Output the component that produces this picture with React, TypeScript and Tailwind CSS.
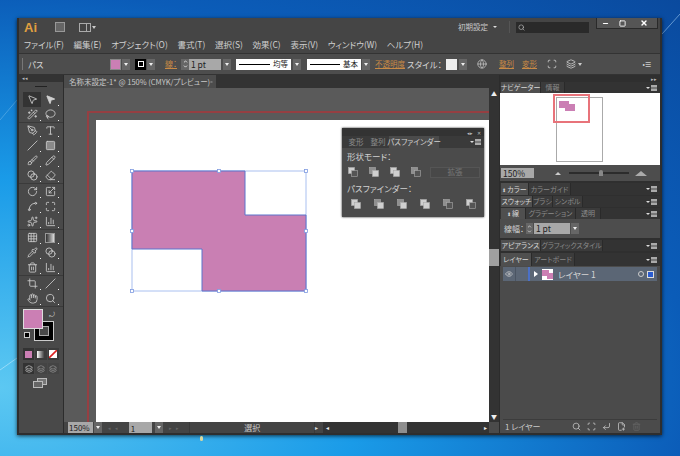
import type { ComponentType } from "react";
import {
  MousePointer2, Wand2, Lasso, PenTool, Type, Slash, Square, Brush, Pencil, Eraser,
  RotateCw, Scaling, Spline, Grid3x3, ChartColumn, Hand, Search, Pipette, Blend, Crop, Sparkles,
  Minus, X, Globe, Trash2, FilePlus2, CornerDownLeft, Eye, ChevronDown, ChevronUp, Layers,
  Maximize, Scan,
} from "lucide-react";

type IconType = ComponentType<{ size?: number; strokeWidth?: number; className?: string }>;

const SolidArrow: IconType = (p) => <MousePointer2 {...p} fill="currentColor" />;
const GrayRect: IconType = (p) => <Square {...p} fill="#8a8a8a" />;
const GradRect = () => <span className="h-[10px] w-[10px] border border-[#999] bg-gradient-to-r from-[#333] to-[#ddd]" />;

function Drop({ className = "" }: { className?: string }) {
  return (
    <span className={`flex h-[11px] w-[8px] items-center justify-center bg-[#666] ${className}`}>
      <span className="h-0 w-0 border-x-[2.5px] border-t-[3px] border-x-transparent border-t-[#eee]" />
    </span>
  );
}

function PanelMenu() {
  return (
    <span className="ml-auto mr-[3px] flex items-center gap-px">
      <span className="h-0 w-0 border-x-[2px] border-t-[2px] border-x-transparent border-t-[#ddd]" />
      <span className="h-[6px] w-[6px] border-y-2 border-[#aaa] bg-[#777]" />
    </span>
  );
}

function Tabs({ tabs, h = "h-[12px]", spin = false }: { tabs: [string, number][]; h?: string; spin?: boolean }) {
  return (
    <div className={`flex ${h} items-stretch bg-[#333] pl-px text-[7px] leading-none`}>
      {tabs.map(([label, w], i) => (
        <span
          key={label}
          style={{ width: w }}
          className={`flex shrink-0 items-center justify-center whitespace-nowrap border-r border-[#2a2a2a] ${
            i === 0 ? "bg-[#4f4f4f] text-[#d8d8d8]" : "bg-[#3b3b3b] text-[#8a8a8a]"
          }`}
        >
          {spin && i === 0 && <span className="mr-px text-[5px]">⬍</span>}
          {label}
        </span>
      ))}
      <PanelMenu />
    </div>
  );
}

function Tool({ icon: Icon, active = false, more = true }: { icon: IconType; active?: boolean; more?: boolean }) {
  return (
    <div className={`relative flex h-[15px] w-[18px] items-center justify-center ${active ? "bg-[#333]" : ""}`}>
      <Icon size={11} strokeWidth={1.8} className="text-[#d0d0d0]" />
      {more && <span className="absolute bottom-px right-0 h-px w-px bg-[#eee]" />}
    </div>
  );
}

function ToolGroup({ rows }: { rows: [IconType, IconType][] }) {
  return (
    <div className="flex flex-col border-b border-[#3a3a3a]">
      {rows.map(([a, b], i) => (
        <div key={i} className="ml-[4px] flex">
          <Tool icon={a} active={a === MousePointer2} more={a !== MousePointer2} />
          <Tool icon={b} />
        </div>
      ))}
    </div>
  );
}

function ToolPanel() {
  return (
    <div className="flex w-[44px] shrink-0 flex-col bg-[#494949]">
      <div className="h-[7px] bg-[#333] pl-[3px] text-[5px] leading-[6px] text-[#bbb]">◂◂</div>
      <div className="flex h-[9px] items-center justify-center">
        <span className="h-px w-[12px] bg-[#222]" />
      </div>
      <div className="h-[1px]" />
      <ToolGroup rows={[[MousePointer2, SolidArrow], [Wand2, Lasso]]} />
      <ToolGroup rows={[[PenTool, Type], [Slash, GrayRect], [Brush, Pencil], [Blend, Eraser]]} />
      <ToolGroup rows={[[RotateCw, Scaling], [Spline, Maximize], [Sparkles, ChartColumn]]} />
      <ToolGroup rows={[[Grid3x3, GradRect], [Pipette, Blend], [Trash2, ChartColumn]]} />
      <ToolGroup rows={[[Crop, Slash], [Hand, Search]]} />
      <div className="relative mt-[2px] h-[34px] w-full">
        <div className="absolute left-[15px] top-[12px] flex h-[20px] w-[20px] items-center justify-center border border-[#ccc] bg-black">
          <div className="h-[10px] w-[10px] border border-[#aaa] bg-[#494949]" />
        </div>
        <div className="absolute left-[4px] top-0 h-[20px] w-[20px] border border-[#ddd] bg-[#cb7fb4]" />
        <span className="absolute left-[30px] top-0 text-[7px] leading-[10px] text-[#ccc]">⤾</span>
        <div className="absolute left-[5px] top-[23px] h-[6px] w-[6px] border border-[#ccc] bg-black" />
      </div>
      <div className="ml-[4px] mt-[5px] flex h-[12px] w-[36px] gap-px">
        <span className="flex flex-1 items-center justify-center bg-[#333]"><span className="h-[7px] w-[7px] bg-[#cb7fb4]" /></span>
        <span className="flex flex-1 items-center justify-center bg-[#3c3c3c]"><span className="h-[7px] w-[7px] bg-gradient-to-r from-white to-[#444]" /></span>
        <span className="flex flex-1 items-center justify-center bg-[#3c3c3c]">
          <svg width="8" height="8" viewBox="0 0 8 8"><rect width="8" height="8" fill="#fff" /><path d="M0 8L8 0" stroke="#d22" strokeWidth="1.6" /></svg>
        </span>
      </div>
      <div className="ml-[4px] mt-[3px] flex h-[11px] w-[36px] gap-px">
        <span className="flex flex-1 items-center justify-center bg-[#333]"><Layers size={8} className="text-[#ccc]" /></span>
        <span className="flex flex-1 items-center justify-center bg-[#444]"><Layers size={8} className="text-[#999]" /></span>
        <span className="flex flex-1 items-center justify-center bg-[#444]"><Layers size={8} className="text-[#999]" /></span>
      </div>
      <div className="ml-[14px] mt-[4px]">
        <svg width="14" height="11" viewBox="0 0 14 11">
          <rect x="4.5" y="0.5" width="9" height="6" fill="#777" stroke="#bbb" />
          <rect x="0.5" y="3.5" width="9" height="6" fill="#666" stroke="#bbb" />
        </svg>
      </div>
    </div>
  );
}

function ArtworkSvg() {
  const handles = [[132, 171], [219, 171], [306, 171], [132, 231], [306, 231], [132, 291], [219, 291], [306, 291]];
  return (
    <svg className="absolute left-0 top-0" width="392" height="302" viewBox="96 120 392 302">
      <rect x="132" y="171" width="174" height="120" fill="none" stroke="#a9c0f0" />
      <path d="M132 171H245V215H306V291H202V249H132Z" fill="#c97fb3" stroke="#5a74cc" strokeWidth="1" />
      {handles.map(([x, y]) => (
        <rect key={`${x}-${y}`} x={x - 1.5} y={y - 1.5} width="3" height="3" fill="#fff" stroke="#7f9be0" strokeWidth="0.8" />
      ))}
    </svg>
  );
}

function PathOpIcon({ kind }: { kind: number }) {
  const fills = ["#cfcfcf", "#8f8f8f", "#555"];
  return (
    <svg width="10" height="10" viewBox="0 0 10 10">
      <rect x="0.5" y="0.5" width="6" height="6" fill={kind % 2 ? fills[1] : fills[0]} stroke="#aaa" strokeWidth="0.6" />
      <rect x="3.5" y="3.5" width="6" height="6" fill={kind % 3 ? fills[0] : fills[2]} stroke="#aaa" strokeWidth="0.6" />
    </svg>
  );
}

function FloatingPanel() {
  return (
    <div className="absolute left-[278px] top-[40px] flex h-[89px] w-[142px] flex-col bg-[#4b4b4b] text-[#d0d0d0] shadow-[0_0_2px_#222]">
      <div className="flex h-[8px] items-center justify-end gap-[4px] bg-[#333] pr-[3px] text-[5px] leading-none text-[#bbb]">
        <span>◂▸</span><span>✕</span>
      </div>
      <div className="flex h-[12px] items-stretch bg-[#3a3a3a] pl-[3px] text-[7.5px] leading-none">
        <span className="flex w-[22px] items-center justify-center text-[#8c8c8c]">変形</span>
        <span className="flex w-[22px] items-center justify-center text-[#8c8c8c]">整列</span>
        <span className="flex w-[50px] items-center justify-center whitespace-nowrap bg-[#4b4b4b]">パスファインダー</span>
        <PanelMenu />
      </div>
      <div className="ml-[5px] mt-[2px] text-[8.5px] leading-[13px]">形状モード：</div>
      <div className="ml-[6px] mt-[3px] flex h-[12px] items-center">
        {[0, 1, 2, 3].map((k) => (
          <span key={k} className="flex w-[21px] justify-start"><PathOpIcon kind={k} /></span>
        ))}
        <span className="-ml-[2px] flex h-[11px] w-[50px] items-center justify-center border border-[#555] bg-[#484848] text-[7.5px] text-[#777]">拡張</span>
      </div>
      <div className="ml-[5px] mt-[4px] text-[8.5px] leading-[13px]">パスファインダー：</div>
      <div className="ml-[9px] mt-[3px] flex h-[12px] items-center gap-[13px]">
        {[4, 5, 1, 2, 3, 0].map((k) => (
          <PathOpIcon key={k} kind={k} />
        ))}
      </div>
    </div>
  );
}

function StatusBar() {
  return (
    <div className="flex h-[11px] shrink-0 items-stretch bg-[#444] text-[8px] leading-none text-[#222]">
      <span className="ml-[4px] flex w-[25px] items-center bg-[#a8a8a8] pl-px">150%</span>
      <Drop className="ml-px" />
      <span className="ml-[6px] flex w-[20px] items-center gap-[4px] text-[5px] text-[#666]"><span>◂</span><span>◂</span></span>
      <span className="ml-[1px] flex w-[24px] items-end bg-[#a8a8a8] pl-[2px]">1</span>
      <Drop className="ml-[3px]" />
      <span className="ml-[6px] flex w-[20px] items-center gap-[4px] text-[5px] text-[#666]"><span>▸</span><span>▸</span></span>
      <span className="flex w-[127px] items-center justify-center border-x border-[#3a3a3a] text-[#c8c8c8]">選択</span>
      <span className="flex w-[6px] items-center text-[6px] text-[#ddd]">▸</span>
      <div className="ml-[2px] flex w-[167px] items-center bg-[#333] text-[6px] text-[#eee]">
        <span className="ml-[3px]">◂</span>
        <span className="ml-[69px] h-full w-[9px] bg-[#8e8e8e]" />
        <span className="ml-auto mr-[2px]">▸</span>
      </div>
      <span className="w-[10px] bg-[#4b4b4b]" />
    </div>
  );
}

function Canvas() {
  return (
    <div className="flex min-w-0 flex-1 flex-col border-l border-[#2c2c2c]">
      <div className="flex h-[13px] items-stretch bg-[#333]">
        <span className="flex w-[152px] items-center justify-between whitespace-nowrap bg-[#4c4c4c] pl-[5px] pr-[3px] text-[7.5px] leading-none text-[#c8c8c8]">
          <span>名称未設定-1* @ 150% (CMYK/プレビュー)</span>
          <X size={6} strokeWidth={3} />
        </span>
      </div>
      <div className="flex min-h-0 flex-1">
        <div className="relative flex-1 overflow-hidden bg-[#5a5a5a]">
          <div className="ml-[23px] mt-[23px] h-[400px] w-[500px] border-2 border-[#963f42] pl-[7px] pt-[7px]">
            <div className="relative h-[380px] w-[480px] bg-white">
              <ArtworkSvg />
            </div>
          </div>
          <FloatingPanel />
        </div>
        <div className="flex w-[10px] flex-col items-center bg-[#333] text-[6px] leading-none text-[#eee]">
          <span className="mt-[3px]">▲</span>
          <span className="mt-[152px] h-[17px] w-full bg-[#a0a0a0]" />
          <span className="mt-auto mb-[2px]">▼</span>
        </div>
      </div>
      <StatusBar />
    </div>
  );
}

function Navigator() {
  return (
    <div className="flex h-[72px] justify-start bg-white pl-[56px]">
      <div className="relative mt-[4px] h-[65px] w-[47px] border border-[#aaa]">
        <span className="absolute left-[2px] top-[3px] h-[7px] w-[10px] bg-[#cb7fb4]" />
        <span className="absolute left-[8px] top-[6px] h-[7px] w-[10px] bg-[#cb7fb4]" />
        <span className="absolute -left-[4px] -top-[4px] h-[29px] w-[37px] border-2 border-[#e8737a]" />
      </div>
    </div>
  );
}

function LayerThumb() {
  return (
    <svg className="ml-[4px]" width="11" height="11" viewBox="0 0 11 11">
      <rect width="11" height="11" fill="#fff" />
      <path d="M0 1H7V4H11V10H5V7H0Z" fill="#cb7fb4" />
    </svg>
  );
}

function Dock() {
  return (
    <div className="flex w-[161px] shrink-0 flex-col border-l border-[#2c2c2c] bg-[#2f2f2f] text-[#d4d4d4]">
      <div className="flex h-[7px] items-center justify-end pr-[3px] text-[5px] leading-none text-[#bbb]">▸▸</div>
      <Tabs tabs={[["ナビゲーター", 40], ["情報", 24]]} h="h-[11px]" />
      <Navigator />
      <div className="flex h-[16px] items-center bg-[#4d4d4d]">
        <span className="ml-[1px] flex h-[10px] w-[33px] items-center bg-[#a8a8a8] pl-[2px] text-[8.5px] leading-none text-[#222]">150%</span>
        <span className="ml-[21px] h-0 w-0 border-x-[3px] border-b-[3px] border-x-transparent border-b-[#ccc]" />
        <span className="relative ml-[8px] h-[2px] w-[60px] bg-[#2c2c2c]">
          <span className="absolute -top-[2px] left-[30px] h-[6px] w-[4px] rounded-t-sm bg-[#888]" />
        </span>
        <span className="ml-[6px] h-0 w-0 border-x-[6px] border-b-[5px] border-x-transparent border-b-[#aaa]" />
      </div>
      <div className="mt-[2px]"><Tabs spin tabs={[["カラー", 28], ["カラーガイド", 42]]} /></div>
      <div className="mt-px"><Tabs tabs={[["スウォッチ", 32], ["ブラシ", 20], ["シンボル", 30]]} h="h-[11px]" /></div>
      <div className="mt-px"><Tabs spin h="h-[11px]" tabs={[["線", 25], ["グラデーション", 50], ["透明", 25]]} /></div>
      <div className="flex h-[19px] items-center bg-[#4d4d4d] pl-[4px] text-[8px] leading-none">
        <span>線幅：</span>
        <span className="ml-[2px] flex h-[11px] w-[7px] flex-col items-center justify-center bg-[#666]">
          <ChevronUp size={5} strokeWidth={4} />
          <ChevronDown size={5} strokeWidth={4} />
        </span>
        <span className="ml-px flex h-[11px] w-[36px] items-center bg-[#a8a8a8] pl-[2px] text-[8.5px] text-[#222]">1 pt</span>
        <Drop className="ml-[1px]" />
      </div>
      <div className="mt-[2px]"><Tabs h="h-[11px]" tabs={[["アピアランス", 40], ["グラフィックスタイル", 62]]} /></div>
      <div className="mt-[2px]"><Tabs tabs={[["レイヤー", 31], ["アートボード", 43]]} h="h-[13px]" /></div>
      <div className="flex min-h-0 flex-1 flex-col bg-[#4b4b4b]">
        <div className="mx-[3px] mt-[1px] flex min-h-0 flex-1 flex-col border-b border-[#3c3c3c]">
          <div className="flex h-[14px] items-center bg-[#5b6675]">
            <span className="flex h-full w-[13px] items-center justify-center border-r border-[#4b5563]"><Eye size={8} /></span>
            <span className="ml-[12px] h-full w-[2px] bg-[#4a70c8]" />
            <span className="ml-[4px] h-0 w-0 border-y-[3px] border-l-[4px] border-y-transparent border-l-white" />
            <LayerThumb />
            <span className="ml-[5px] text-[8.5px] leading-none">レイヤー 1</span>
            <span className="ml-auto h-[6px] w-[6px] rounded-full border border-[#ccc]" />
            <span className="ml-[3px] mr-[3px] flex h-[7px] w-[7px] items-center justify-center border border-[#ddd] bg-[#2a5cd0]" />
          </div>
        </div>
        <div className="flex h-[13px] shrink-0 items-center pl-[5px] text-[8px] leading-none text-[#c8c8c8]">
          <span className="w-[67px]">1 レイヤー</span>
          <span className="flex items-center gap-[6px] text-[#c8c8c8]">
            <Search size={9} />
            <Scan size={9} />
            <CornerDownLeft size={9} />
            <FilePlus2 size={9} />
            <Trash2 size={9} className="text-[#666]" />
          </span>
        </div>
      </div>
    </div>
  );
}

function ControlBar() {
  return (
    <div className="flex h-[22px] shrink-0 items-center border-y border-[#333] bg-[#4d4d4d] text-[9px] leading-none text-[#d4d4d4]">
      <span className="ml-[3px] h-[12px] w-px bg-[#777]" />
      <span className="ml-[5px] w-[82px] text-[8.5px]">パス</span>
      <span className="h-[11px] w-[11px] border border-[#888] bg-[#cb7fb4]" />
      <Drop className="ml-px" />
      <span className="ml-[5px] flex h-[11px] w-[11px] items-center justify-center bg-black">
        <span className="h-[6px] w-[6px] border border-white" />
      </span>
      <Drop className="ml-px" />
      <span className="ml-[10px] w-[14px] text-[8px] text-[#c98a45] underline">線：</span>
      <span className="ml-[2px] flex h-[11px] w-[8px] flex-col items-center justify-center bg-[#666] text-[#eee]">
        <ChevronUp size={5} strokeWidth={4} />
        <ChevronDown size={5} strokeWidth={4} />
      </span>
      <span className="flex h-[11px] w-[32px] items-center bg-[#a8a8a8] pl-[2px] text-[8.5px] text-[#222]">1 pt</span>
      <Drop className="ml-[2px]" />
      <span className="ml-[5px] flex h-[11px] w-[55px] items-center bg-white px-[3px] text-[7.5px] text-[#222]">
        <span className="mr-[3px] h-px flex-1 bg-black" />均等
      </span>
      <Drop className="ml-[2px]" />
      <span className="ml-[6px] flex h-[11px] w-[54px] items-center bg-white px-[3px] text-[7.5px] text-[#222]">
        <span className="mr-[3px] h-px flex-1 bg-black" />基本
      </span>
      <Drop className="ml-px" />
      <span className="ml-[5px] w-[30px] whitespace-nowrap text-[7.5px] text-[#c98a45] underline">不透明度</span>
      <span className="ml-[2px] w-[38px] whitespace-nowrap text-[8.5px]">スタイル：</span>
      <span className="ml-px h-[11px] w-[11px] bg-[#eee]" />
      <Drop className="ml-[2px]" />
      <Globe size={10} className="ml-[10px] text-[#bbb]" />
      <span className="ml-[12px] text-[7.5px] text-[#c98a45] underline">整列</span>
      <span className="ml-[8px] text-[7.5px] text-[#c98a45] underline">変形</span>
      <Scan size={10} className="ml-[10px] text-[#ccc]" />
      <Layers size={10} className="ml-[9px] text-[#ccc]" />
      <span className="ml-[2px] h-0 w-0 border-x-[2px] border-t-[3px] border-x-transparent border-t-[#ccc]" />
      <span className="ml-auto mr-[9px] text-[7px] text-[#ccc]">•☰</span>
    </div>
  );
}

function TitleBar() {
  return (
    <div className="flex h-[18px] shrink-0 items-center bg-[#454545] text-[#c8c8c8]">
      <span className="ml-[5px] font-['Liberation_Sans',sans-serif] text-[13px] font-bold leading-none text-[#e0a040]">Ai</span>
      <span className="ml-[18px] h-[10px] w-[10px] border border-[#999] bg-[#666]" />
      <span className="ml-[14px] flex h-[9px] w-[12px] gap-px bg-[#aaa] p-px"><span className="flex-1 bg-[#444]" /><span className="w-[3px] bg-[#444]" /></span>
      <span className="ml-[1px] h-0 w-0 border-x-[2px] border-t-[3px] border-x-transparent border-t-[#ccc]" />
      <span className="ml-auto whitespace-nowrap text-[7.5px] leading-none">初期設定</span>
      <span className="ml-[5px] h-0 w-0 border-x-[2px] border-t-[2px] border-x-transparent border-t-[#ddd]" />
      <span className="ml-[12px] h-[12px] w-px bg-[#555]" />
      <span className="ml-[6px] flex h-[11px] w-[73px] items-center bg-[#2a2a2a] pl-[2px]"><Search size={7} /></span>
      <div className="mb-[7px] ml-[7px] flex h-[11px] w-[62px] self-start border border-t-0 border-[#2a2a2a] bg-[#555] text-white">
        <span className="flex w-[17px] items-center justify-center"><Minus size={7} strokeWidth={4} /></span>
        <span className="flex w-[17px] items-center justify-center"><Square size={7} strokeWidth={3} /></span>
        <span className="flex flex-1 items-center justify-center"><X size={8} strokeWidth={4} /></span>
      </div>
      <span className="w-[2px]" />
    </div>
  );
}

function MenuBar() {
  const items = ["ファイル(F)", "編集(E)", "オブジェクト(O)", "書式(T)", "選択(S)", "効果(C)", "表示(V)", "ウィンドウ(W)", "ヘルプ(H)"];
  return (
    <div className="flex h-[17px] shrink-0 items-center gap-[9.7px] bg-[#454545] pl-[5px] text-[8.5px] leading-none text-[#d0d0d0]">
      {items.map((m) => (
        <span key={m} className="whitespace-nowrap">{m}</span>
      ))}
    </div>
  );
}

export default function App() {
  return (
    <div className="relative h-[456px] w-[680px] overflow-hidden bg-[radial-gradient(ellipse_at_0%_85%,#5cc8f2,#1a9be8_38%,#0b5cb8_72%,#0a4a9e)] pl-[17px] pt-[18px] font-['Noto_Sans_CJK_JP','Noto_Sans',sans-serif] [font-feature-settings:'palt']">
      <svg className="absolute left-0 top-0" width="680" height="456" viewBox="0 0 680 456">
        <path d="M662 34L680 14" stroke="#9fc8ee" strokeOpacity="0.6" />
        <path d="M0 370L17 358" stroke="#d6f2ff" strokeOpacity="0.5" />
        <path d="M0 120L17 100" stroke="#d6f2ff" strokeOpacity="0.25" />
      </svg>
      <div className="relative flex h-[417px] w-[645px] flex-col border-x-2 border-b-2 border-[#2e2e2e] bg-[#3a3a3a] shadow-[0_1px_4px_rgba(0,0,0,0.7)]">
        <TitleBar />
        <MenuBar />
        <ControlBar />
        <div className="flex min-h-0 flex-1">
          <ToolPanel />
          <Canvas />
          <Dock />
        </div>
      </div>
      <span className="absolute left-[200px] top-[436px] h-[5px] w-[3px] rounded-full bg-[#d8d8a0]" />
    </div>
  );
}
